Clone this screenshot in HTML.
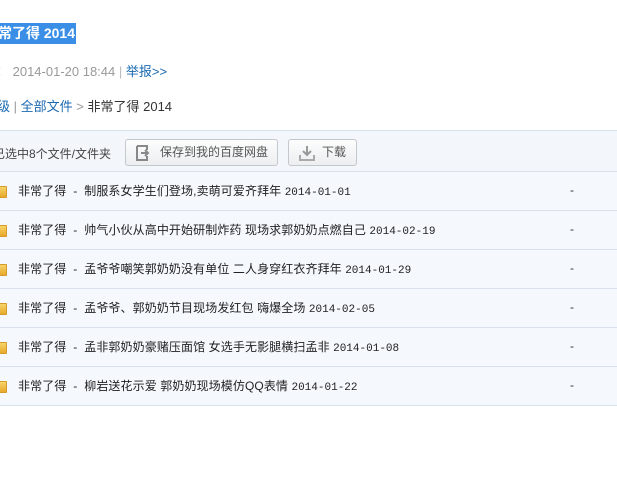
<!DOCTYPE html>
<html><head><meta charset="utf-8"><style>
*{margin:0;padding:0;box-sizing:border-box}
body{width:617px;height:478px;background:#fff;font-family:"Liberation Sans","Noto Sans CJK SC",sans-serif;position:relative;overflow:hidden;font-size:12px;color:#333}
.title{position:absolute;left:0;top:23px;height:21px;width:76px;background:#3a8ee6;overflow:hidden}
.title span{position:absolute;right:1px;top:0;color:#fff;font-weight:bold;font-size:14px;line-height:21px;white-space:nowrap}
.meta{position:absolute;left:-4px;top:64px;color:#999;line-height:16px;white-space:nowrap;font-size:13px}
.meta a{color:#1a6ab1;text-decoration:none}
.bc{position:absolute;left:-3px;top:99px;line-height:16px;white-space:nowrap;color:#333;font-size:13px}
.bc a{color:#1a6ab1}
.tb{position:absolute;left:0;top:130px;width:617px;height:42px;background:#f3f6fb;border-top:1px solid #d8e0ea;border-bottom:1px solid #d8e0ea}
.tb .sel{position:absolute;left:-7px;top:14px;color:#444;white-space:nowrap}
.btn{position:absolute;top:8px;height:27px;border:1px solid #c3c8ce;border-radius:3px;background:linear-gradient(#fdfdfd,#eceef0);color:#555;font-size:12px;line-height:25px;white-space:nowrap}
.row{position:absolute;left:0;width:617px;height:39px;background:#f5f8fd;border-bottom:1px solid #d9e1ec}
.row .f{position:absolute;left:-2px;top:14px;width:9px;height:12px;background:linear-gradient(#f7d46a,#e8a92a);border:1px solid #d49b2a;border-radius:1px}
.row .t{position:absolute;left:18px;top:11px;font-size:12px;color:#222;white-space:nowrap;line-height:16px;letter-spacing:0.1px}
.row .t span{font-family:"Liberation Mono",monospace;font-size:11px;letter-spacing:0}
.row .d{position:absolute;left:570px;top:11px;color:#333}
</style></head><body>
<div class="title"><span>非常了得 2014</span></div>
<div class="meta">：&nbsp;2014-01-20 18:44 <span style="color:#bbb">|</span> <a>举报&gt;&gt;</a></div>
<div class="bc"><a>级</a> <span style="color:#999">|</span> <a>全部文件</a> <span style="color:#999">&gt;</span> 非常了得 2014</div>
<div class="tb">
<div class="sel">已选中8个文件/文件夹</div>
<div class="btn" style="left:125px;width:153px"><svg style="position:absolute;left:10px;top:5px" width="17" height="16" viewBox="0 0 17 16"><path d="M1 1h10v4M1 1v14h10v-4" fill="none" stroke="#888" stroke-width="2"/><path d="M5 8h7M9 5l3 3-3 3" fill="none" stroke="#888" stroke-width="2"/></svg><span style="position:absolute;left:34px">保存到我的百度网盘</span></div>
<div class="btn" style="left:288px;width:69px"><svg style="position:absolute;left:10px;top:5px" width="16" height="16" viewBox="0 0 16 16"><path d="M8 1v9M4 6l4 4 4-4" fill="none" stroke="#999" stroke-width="2"/><path d="M1 10v5h14v-5" fill="none" stroke="#aaa" stroke-width="2"/></svg><span style="position:absolute;left:33px">下载</span></div>
</div>
<div class="row" style="top:172px"><div class="f"></div><div class="t">非常了得 &nbsp;- &nbsp;制服系女学生们登场,卖萌可爱齐拜年 <span>2014-01-01</span></div><div class="d">-</div></div>
<div class="row" style="top:211px"><div class="f"></div><div class="t">非常了得 &nbsp;- &nbsp;帅气小伙从高中开始研制炸药 现场求郭奶奶点燃自己 <span>2014-02-19</span></div><div class="d">-</div></div>
<div class="row" style="top:250px"><div class="f"></div><div class="t">非常了得 &nbsp;- &nbsp;孟爷爷嘲笑郭奶奶没有单位 二人身穿红衣齐拜年 <span>2014-01-29</span></div><div class="d">-</div></div>
<div class="row" style="top:289px"><div class="f"></div><div class="t">非常了得 &nbsp;- &nbsp;孟爷爷、郭奶奶节目现场发红包 嗨爆全场 <span>2014-02-05</span></div><div class="d">-</div></div>
<div class="row" style="top:328px"><div class="f"></div><div class="t">非常了得 &nbsp;- &nbsp;孟非郭奶奶豪赌压面馆 女选手无影腿横扫孟非 <span>2014-01-08</span></div><div class="d">-</div></div>
<div class="row" style="top:367px"><div class="f"></div><div class="t">非常了得 &nbsp;- &nbsp;柳岩送花示爱 郭奶奶现场模仿QQ表情 <span>2014-01-22</span></div><div class="d">-</div></div>
</body></html>
